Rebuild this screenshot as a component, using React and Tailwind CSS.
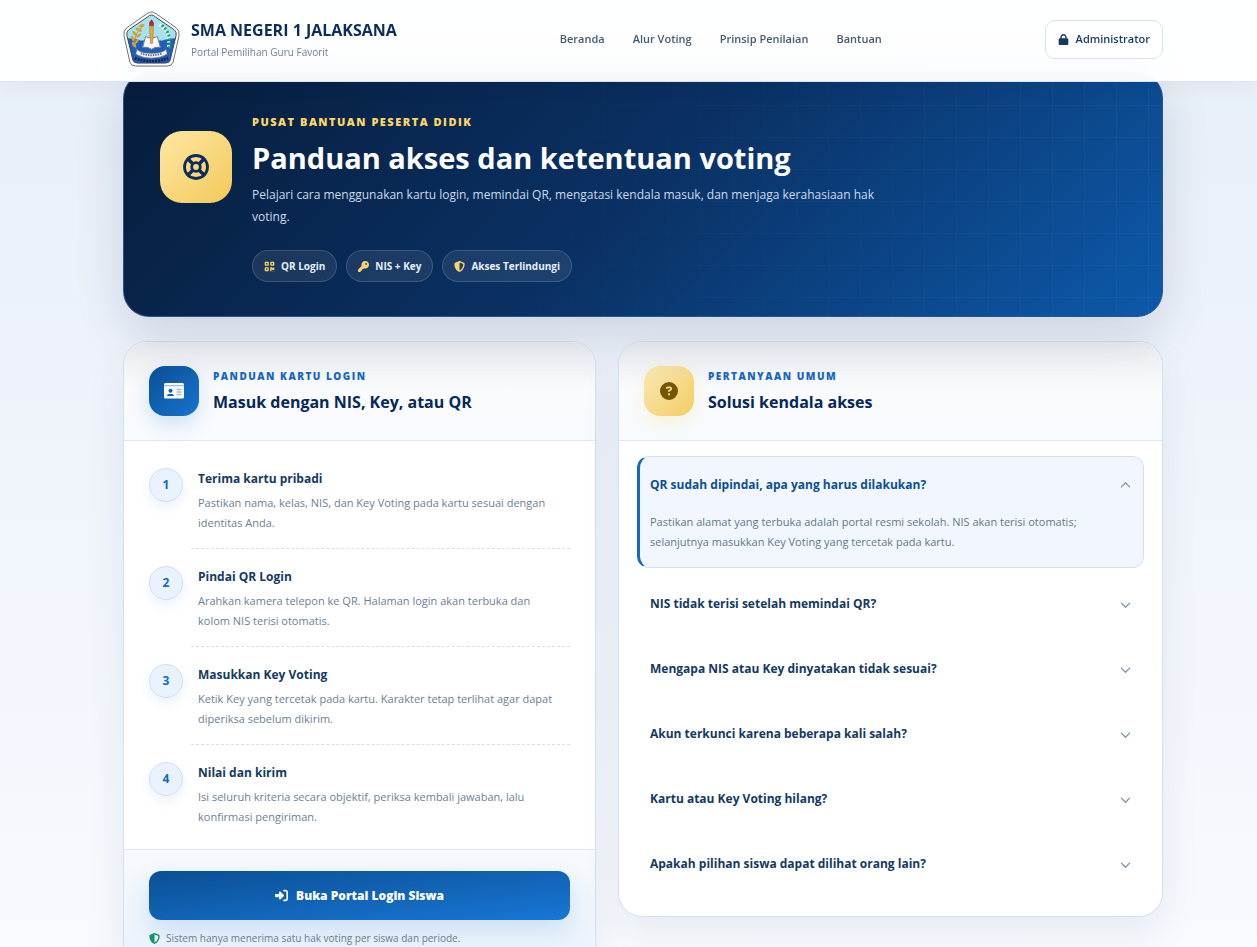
import { useState } from "react";
import {
  FaChevronDown,
  FaCircleQuestion,
  FaKey,
  FaLock,
  FaQrcode,
  FaRightToBracket,
  FaShieldHalved,
} from "react-icons/fa6";

const navLinks = [
  { label: "Beranda", href: "#beranda" },
  { label: "Alur Voting", href: "#alur" },
  { label: "Prinsip Penilaian", href: "#prinsip" },
  { label: "Bantuan", href: "#bantuan" },
];

const badges = [
  { label: "QR Login", icon: FaQrcode },
  { label: "NIS + Key", icon: FaKey },
  { label: "Akses Terlindungi", icon: FaShieldHalved },
];

const steps = [
  {
    title: "Terima kartu pribadi",
    text: "Pastikan nama, kelas, NIS, dan Key Voting pada kartu sesuai dengan identitas Anda.",
  },
  {
    title: "Pindai QR Login",
    text: "Arahkan kamera telepon ke QR. Halaman login akan terbuka dan kolom NIS terisi otomatis.",
  },
  {
    title: "Masukkan Key Voting",
    text: "Ketik Key yang tercetak pada kartu. Karakter tetap terlihat agar dapat diperiksa sebelum dikirim.",
  },
  {
    title: "Nilai dan kirim",
    text: "Isi seluruh kriteria secara objektif, periksa kembali jawaban, lalu konfirmasi pengiriman.",
  },
];

const faqs = [
  {
    q: "QR sudah dipindai, apa yang harus dilakukan?",
    a: "Pastikan alamat yang terbuka adalah portal resmi sekolah. NIS akan terisi otomatis; selanjutnya masukkan Key Voting yang tercetak pada kartu.",
  },
  {
    q: "NIS tidak terisi setelah memindai QR?",
    a: "Ketik NIS secara manual sesuai yang tercetak pada kartu.",
  },
  {
    q: "Mengapa NIS atau Key dinyatakan tidak sesuai?",
    a: "Periksa kembali setiap karakter NIS dan Key Voting pada kartu.",
  },
  {
    q: "Akun terkunci karena beberapa kali salah?",
    a: "Tunggu beberapa menit, lalu coba masuk kembali.",
  },
  {
    q: "Kartu atau Key Voting hilang?",
    a: "Hubungi panitia untuk mendapatkan kartu pengganti.",
  },
  {
    q: "Apakah pilihan siswa dapat dilihat orang lain?",
    a: "Tidak. Pilihan setiap siswa dijaga kerahasiaannya.",
  },
];

const SchoolLogo = () => (
  <svg viewBox="0 0 58 58" className="size-[57px] shrink-0" aria-hidden="true">
    <defs>
      <clipPath id="crest">
        <path d="M29 4 Q31 4 33 6 L52 19 Q55 21 54 25 L48 50 Q47 53 43 53 H15 Q11 53 10 50 L4 25 Q3 21 6 19 L25 6 Q27 4 29 4Z" />
      </clipPath>
    </defs>
    <path
      d="M29 1 Q31 1 34 3 L54 17 Q58 20 57 25 L51 52 Q50 56 45 56 H13 Q8 56 7 52 L1 25 Q0 20 4 17 L24 3 Q27 1 29 1Z"
      fill="#fff"
      stroke="#6b6f78"
      strokeWidth="1"
    />
    <g clipPath="url(#crest)">
      <rect width="58" height="58" fill="#a5e1ef" />
      <path d="M0 28 Q10 27 18 30 H40 Q48 27 58 28 V58 H0Z" fill="#1e5fbe" />
    </g>
    <path
      d="M29 4 Q31 4 33 6 L52 19 Q55 21 54 25 L48 50 Q47 53 43 53 H15 Q11 53 10 50 L4 25 Q3 21 6 19 L25 6 Q27 4 29 4Z"
      fill="none"
      stroke="#3f4652"
      strokeWidth="1"
    />
    {/* padi */}
    <path d="M21 15 Q9 23 13 38" fill="none" stroke="#c99f2c" strokeWidth="1" />
    <g fill="#d0a437">
      <ellipse cx="19" cy="15" rx="3" ry="1.5" transform="rotate(-20 19 15)" />
      <ellipse cx="16" cy="19" rx="3.5" ry="1.5" transform="rotate(30 16 19)" />
      <ellipse cx="12" cy="23" rx="3.5" ry="1.5" transform="rotate(50 12 23)" />
      <ellipse cx="16" cy="25" rx="3" ry="1.3" transform="rotate(-40 16 25)" />
      <ellipse cx="10" cy="28" rx="3" ry="1.5" transform="rotate(65 10 28)" />
      <ellipse cx="14" cy="31" rx="3" ry="1.3" transform="rotate(-50 14 31)" />
      <ellipse cx="11" cy="34" rx="3" ry="1.5" transform="rotate(60 11 34)" />
    </g>
    {/* kapas */}
    <path d="M37 14 Q49 22 46 38" fill="none" stroke="#eef7ef" strokeWidth="3" strokeDasharray="2 2" />
    <path d="M38 13 Q50 22 47 38" fill="none" stroke="#1fa25b" strokeWidth="3" strokeDasharray="2 2" strokeDashoffset="2" />
    {/* buku dan obor */}
    <path d="M23 26 L29 28 L35 26 L38 37 Q33 36 29 39 Q25 36 20 37Z" fill="#f7f7f4" stroke="#77808a" strokeWidth="1" />
    <path d="M27 16 H31 L30 33 H28Z" fill="#e8ac32" stroke="#9c6b24" strokeWidth="0.5" />
    <path d="M27 15 Q26 12 29 9 Q32 12 31 15Z" fill="#c62828" stroke="#7c1d1d" strokeWidth="0.5" />
    <path d="M14 39 Q18 43 29 43 Q40 43 44 39 L45 44 Q38 48 29 48 Q20 48 13 44Z" fill="#f7f7f3" stroke="#60666e" strokeWidth="0.7" />
    <path d="M18 43 Q29 47 40 43" fill="none" stroke="#6d737b" strokeWidth="2" strokeDasharray="1.5 1" />
    <path d="M12 48 Q29 54 46 48" fill="none" stroke="#14244c" strokeWidth="3" strokeDasharray="2 1" />
  </svg>
);

const LifeRing = () => (
  <svg viewBox="0 0 28 28" className="size-7" fill="none" stroke="#0b2d5e" aria-hidden="true">
    <circle cx="14" cy="14" r="11.5" strokeWidth="2.8" />
    <circle cx="14" cy="14" r="4.3" strokeWidth="2.8" />
    <path d="M5 5 L11 11 M17 17 L23 23 M23 5 L17 11 M11 17 L5 23" strokeWidth="3.4" />
  </svg>
);

const IdCard = () => (
  <svg viewBox="0 0 20 16" className="h-4 w-5" aria-hidden="true">
    <rect width="20" height="15.5" rx="1.5" fill="#fff" />
    <rect y="2" width="20" height="1.3" fill="#9fbfe4" />
    <circle cx="6.5" cy="7.8" r="2" fill="#1260b5" />
    <path d="M3 13 Q3 11 5 11 H8 Q10 11 10 13Z" fill="#1260b5" />
    <path d="M12.5 6.5 H17.5 M12.5 9 H17.5 M12.5 11.5 H17.5" stroke="#9fbfe4" strokeWidth="1.4" />
  </svg>
);

const CardHeader = ({ eyebrow, title, iconClass, children }) => (
  <header className="flex items-center gap-3.5 border-b border-[#dfe8f1] bg-linear-to-b from-[#eceef1] via-[#fafbfd] via-50% to-[#f7fbff] px-[25px] py-6">
    <div
      className={`flex size-[50px] shrink-0 items-center justify-center rounded-2xl ${iconClass}`}
    >
      {children}
    </div>
    <div>
      <p className="text-[10px] leading-5 font-extrabold tracking-[1.5px] text-[#1768c4] uppercase">
        {eyebrow}
      </p>
      <h2 className="mt-0.5 text-base leading-7 font-bold text-[#06285a]">{title}</h2>
    </div>
  </header>
);

const App = () => {
  const [openIndex, setOpenIndex] = useState(0);

  return (
    <div className="min-h-screen bg-linear-to-b from-[#e5eef7] via-[#eef3fb] via-35% to-[#f8fbff] font-['Open_Sans','Noto_Sans',sans-serif] text-[#173a5e]">
      {/* Header */}
      <header className="sticky top-0 z-10 border-b border-[#dce6f0] bg-white/95 pl-[29px] shadow-[0_6px_20px_rgba(7,36,77,0.04)] backdrop-blur-lg">
        <div className="mx-auto flex h-[81px] max-w-[1040px] items-center justify-between pb-0.5">
          <a href="#beranda" className="flex items-center gap-[11px]">
            <SchoolLogo />
            <span>
              <strong className="block text-base leading-6 font-bold text-[#0a2d5e]">
                SMA NEGERI 1 JALAKSANA
              </strong>
              <span className="block text-[10px] leading-5 text-[#718198]">
                Portal Pemilihan Guru Favorit
              </span>
            </span>
          </a>
          <nav className="flex gap-7">
            {navLinks.map((link) => (
              <a
                key={link.label}
                href={link.href}
                className="text-[11px] font-semibold text-[#475b75]"
              >
                {link.label}
              </a>
            ))}
          </nav>
          <a
            href="#admin"
            className="flex h-[39px] items-center gap-[7px] rounded-[10px] border border-[#d7e3ef] bg-white px-3 text-[11px] font-semibold text-[#173a5e]"
          >
            <FaLock className="size-[11px]" />
            Administrator
          </a>
        </div>
      </header>

      <main className="-mt-[10px] pb-10 pl-[29px]">
        <div className="mx-auto max-w-[1040px]">
          {/* Hero, the grid overlay fades out to the left */}
          <section className="relative overflow-hidden rounded-[26px] border border-[#2a5587] bg-[linear-gradient(135deg,#061c3b_0%,#0a3164_50%,#0d59aa_100%)] px-9 pt-[41px] pb-[34px] shadow-[0_20px_50px_rgba(7,36,77,0.14)] before:absolute before:inset-0 before:bg-[linear-gradient(rgba(255,255,255,0.03)_1px,transparent_1px),linear-gradient(90deg,rgba(255,255,255,0.03)_1px,transparent_1px)] before:bg-size-[32px_32px] before:[mask-image:linear-gradient(90deg,transparent_20%,black)]">
            <div className="relative flex items-start gap-5">
              <div className="mt-[17px] flex size-[72px] shrink-0 items-center justify-center rounded-[22px] bg-linear-to-br from-[#ffe8a3] to-[#f2c855]">
                <LifeRing />
              </div>
              <div>
                <p className="text-[11px] leading-4 font-extrabold tracking-[1.5px] text-[#ffd766] uppercase">
                  Pusat bantuan peserta didik
                </p>
                <h1 className="mt-2 text-[29px] leading-10 font-bold text-white">
                  Panduan akses dan ketentuan voting
                </h1>
                <p className="mt-1.5 max-w-[650px] text-xs leading-[22px] text-[#cbdbee]">
                  Pelajari cara menggunakan kartu login, memindai QR, mengatasi kendala masuk, dan
                  menjaga kerahasiaan hak voting.
                </p>
                <ul className="mt-[22px] flex flex-wrap gap-[9px]">
                  {badges.map(({ label, icon: Icon }) => (
                    <li
                      key={label}
                      className="flex h-8 items-center gap-1.5 rounded-full border border-white/15 bg-white/8 px-[11px] text-[10px] font-bold text-[#e6f0fb]"
                    >
                      <Icon className="size-[11px] text-[#f8d56c]" />
                      {label}
                    </li>
                  ))}
                </ul>
              </div>
            </div>
          </section>

          <div className="mt-6 grid grid-cols-[473fr_545fr] items-start gap-[22px]">
            {/* Login card guide */}
            <section className="overflow-hidden rounded-3xl border border-[#d3e0ed] bg-white shadow-[0_16px_40px_rgba(7,36,77,0.07)]">
              <CardHeader
                eyebrow="Panduan kartu login"
                title="Masuk dengan NIS, Key, atau QR"
                iconClass="bg-linear-to-br from-[#0b4f95] to-[#1874d1] shadow-[0_8px_20px_rgba(23,104,196,0.18)]"
              >
                <IdCard />
              </CardHeader>

              <ol className="px-[25px] pt-2.5 pb-[6px]">
                {steps.map((step, i) => (
                  <li key={step.title} className="group flex gap-2 pt-[17px]">
                    <span className="flex size-[34px] shrink-0 items-center justify-center rounded-full border border-[#cfe1f4] bg-[#eaf3fd] text-xs font-bold text-[#1768c4] shadow-[0_5px_12px_rgba(23,104,196,0.09)]">
                      {i + 1}
                    </span>
                    <div className="flex-1 border-b border-dashed border-[#d5e0ec] pt-px pr-3 pb-[15px] pl-[7px] group-last:border-transparent">
                      <h3 className="text-xs leading-5 font-bold text-[#143a61]">{step.title}</h3>
                      <p className="mt-1 text-[11px] leading-5 text-[#6c7f95]">{step.text}</p>
                    </div>
                  </li>
                ))}
              </ol>

              <footer className="border-t border-[#dfe8f1] bg-linear-to-b from-[#f7fafd] to-[#e9f2fc] px-[25px] pt-[21px] pb-5">
                <a
                  href="#login"
                  className="flex h-[49px] items-center justify-center gap-2 rounded-xl bg-linear-to-br from-[#0b4f95] to-[#1877d6] text-xs font-extrabold text-white shadow-[0_10px_24px_rgba(23,104,196,0.16)]"
                >
                  <FaRightToBracket className="size-[13px]" />
                  Buka Portal Login Siswa
                </a>
                <p className="mt-2 flex items-center gap-1.5 text-[10px] leading-5 text-[#667c92]">
                  <FaShieldHalved className="size-[11px] text-[#17936b]" />
                  Sistem hanya menerima satu hak voting per siswa dan periode.
                </p>
              </footer>
            </section>

            {/* FAQ */}
            <section className="overflow-hidden rounded-3xl border border-[#d3e0ed] bg-white shadow-[0_16px_40px_rgba(7,36,77,0.07)]">
              <CardHeader
                eyebrow="Pertanyaan umum"
                title="Solusi kendala akses"
                iconClass="bg-linear-to-br from-[#f8e9b5] to-[#f4cd60] text-[#745500] shadow-[0_8px_20px_rgba(244,205,96,0.2)]"
              >
                <FaCircleQuestion className="size-[18px]" />
              </CardHeader>

              <div className="flex flex-col gap-[7px] px-[18px] pt-[15px] pb-[23px]">
                {faqs.map((item, i) => {
                  const open = i === openIndex;
                  return (
                    <div
                      key={item.q}
                      className={`rounded-xl border border-l-3 pl-2.5 ${
                        open
                          ? "border-[#cfe0f2] border-l-[#1768c4] bg-[#f2f7ff]"
                          : "border-transparent"
                      }`}
                    >
                      <button
                        type="button"
                        aria-expanded={open}
                        onClick={() => setOpenIndex(open ? -1 : i)}
                        className={`flex h-14 w-full items-center justify-between pr-3 text-left text-xs font-bold ${
                          open ? "text-[#0b4f95]" : "text-[#143a61]"
                        }`}
                      >
                        {item.q}
                        <FaChevronDown
                          className={`size-[11px] text-[#8296ad] ${open ? "rotate-180" : ""}`}
                        />
                      </button>
                      {open && (
                        <p className="-mt-px pr-12 pb-[15px] text-[11px] leading-5 text-[#62778e]">
                          {item.a}
                        </p>
                      )}
                    </div>
                  );
                })}
              </div>
            </section>
          </div>
        </div>
      </main>
    </div>
  );
};

export default App;
